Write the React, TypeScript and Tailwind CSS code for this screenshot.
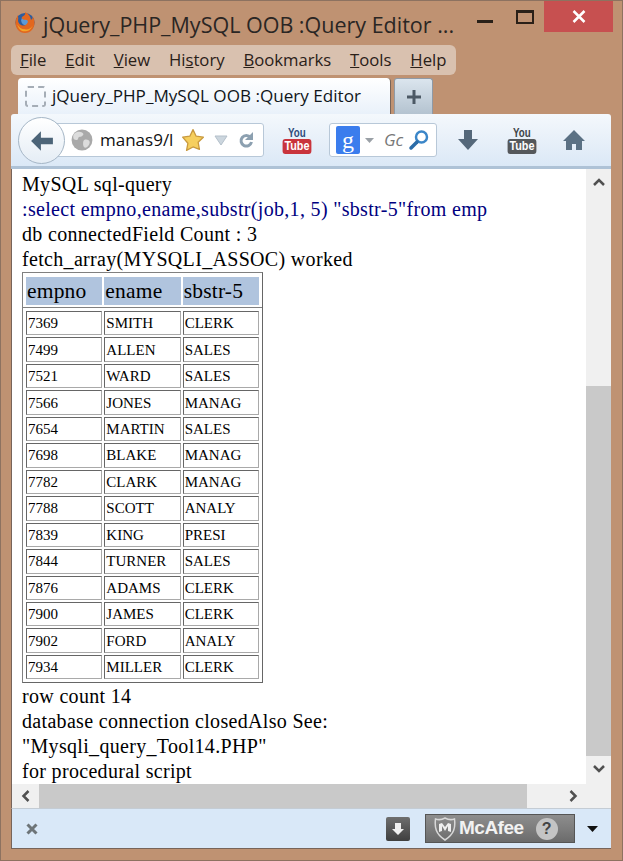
const rows = [
  ['7369', 'SMITH', 'CLERK'],
  ['7499', 'ALLEN', 'SALES'],
  ['7521', 'WARD', 'SALES'],
  ['7566', 'JONES', 'MANAG'],
  ['7654', 'MARTIN', 'SALES'],
  ['7698', 'BLAKE', 'MANAG'],
  ['7782', 'CLARK', 'MANAG'],
  ['7788', 'SCOTT', 'ANALY'],
  ['7839', 'KING', 'PRESI'],
  ['7844', 'TURNER', 'SALES'],
  ['7876', 'ADAMS', 'CLERK'],
  ['7900', 'JAMES', 'CLERK'],
  ['7902', 'FORD', 'ANALY'],
  ['7934', 'MILLER', 'CLERK'],
]

const menus = [
  ['F', 'ile', ''],
  ['E', 'dit', ''],
  ['V', 'iew', ''],
  ['Hi', 's', 'tory'],
  ['B', 'ookmarks', ''],
  ['T', 'ools', ''],
  ['H', 'elp', ''],
]

function FirefoxLogo() {
  return (
    <svg width="22" height="23" viewBox="0 0 22 24">
      <circle cx="11" cy="12" r="10" fill="#2d5c9e" />
      <circle cx="12" cy="10" r="5" fill="#5d9ad6" />
      <path d="M3 4c0 3-2 5-2 8 0 6 4 11 10 11s10-5 10-11c0-2-1-5-2-6 0 2-1 3-2 3 0-3-2-6-6-8 1 3-1 4-3 5-1 1 0 3 2 3s4 0 4 2-3 5-6 4c-3-1-5-4-4-7 0-2-1-3-1-4z" fill="#e2671f" />
      <path d="M3 14c1 5 5 8 9 7 3 0 6-3 7-6-2 3-5 5-8 4-4 0-6-2-8-5z" fill="#f4a62a" />
    </svg>
  )
}

function Globe() {
  return (
    <svg className="shrink-0" width="22" height="22" viewBox="0 0 20 20">
      <circle cx="10" cy="10" r="9.500" fill="#a9a9a9" />
      <path d="M5 3c3-1 5 0 6 1s-1 3-3 3-1 3-3 3-3-1-3-3 1-3 3-4zM12 10c2-1 5 0 5 2s-2 5-4 5-2-3-2-4 0-2 1-3z" fill="#dcdcdc" />
    </svg>
  )
}

function Star() {
  return (
    <svg width="24" height="24" viewBox="0 0 22 22">
      <path d="M11 1.500l2.900 6 6.600.9-4.800 4.600 1.200 6.500L11 17.400l-5.900 3.100 1.200-6.500L1.500 8.400l6.600-.9z" fill="#f6cf5e" stroke="#c99a3f" strokeWidth="1.200" strokeLinejoin="round" />
    </svg>
  )
}

function ReloadIcon() {
  return (
    <svg width="16" height="18" viewBox="0 0 16 18" fill="none">
      <path d="M12.500 6.500A5.300 5.300 0 1 0 13.500 11" stroke="#8ca0b0" strokeWidth="3" />
      <path d="M15 1v8H7z" fill="#8ca0b0" />
    </svg>
  )
}

function YouTubeBadge({ blurred }: { blurred?: boolean }) {
  return (
    <div className={`flex flex-col items-center font-['Liberation_Sans',sans-serif] font-bold leading-none ${blurred ? 'text-[#2f4d7c]' : 'text-[#3f4549]'}`}>
      <span className="h-[12px] scale-x-75 text-[13px]">You</span>
      <span className={`mt-[1px] h-[15px] scale-x-90 rounded-[3px] px-[2px] text-[12px] leading-[15px] text-white ${blurred ? 'bg-[#c9343c]' : 'bg-[#55585b]'}`}>Tube</span>
    </div>
  )
}

function McAfeeShield() {
  return (
    <svg className="shrink-0" width="22" height="24" viewBox="0 0 22 24" fill="none">
      <path d="M1.500 2c3 1 6 1 9.500-1 3.500 2 6.500 2 9.500 1 1 8 0 15-9.500 21C1.500 17 .5 10 1.500 2z" stroke="#d8d8d8" strokeWidth="1.500" />
      <path d="M5 7v8l3-1V9l3 5 3-5v5l3 1V7l-3-1-3 4-3-4z" fill="#efefef" />
    </svg>
  )
}

function Chevron({ dir }: { dir: 'up' | 'down' | 'left' | 'right' }) {
  const d = {
    up: 'M2 9l5-5 5 5',
    down: 'M2 4l5 5 5-5',
    left: 'M9.500 2L4.500 7l5 5',
    right: 'M4.500 2l5 5-5 5',
  }[dir]
  return (
    <svg width="14" height="14" viewBox="0 0 14 14" fill="none">
      <path d={d} stroke="#505050" strokeWidth="2.500" />
    </svg>
  )
}

export default function App() {
  return (
    <div className="h-[861px] w-[623px] overflow-hidden border border-[#8d7260] bg-[#bf9272] font-['Open_Sans',sans-serif] text-[#1b1410]">
      {/* title bar */}
      <div className="flex h-[44px] items-start pl-[13px] pr-[9px]">
        <div className="mt-[10px]">
          <FirefoxLogo />
        </div>
        <span className="ml-[7px] mt-[8px] whitespace-nowrap text-[21.500px] leading-[32px] text-[#2a2624]">jQuery_PHP_MySQL OOB :Query Editor ...</span>
        <div className="ml-auto flex items-start">
          <div className="mr-[23px] mt-[19px] h-[3px] w-[16px] bg-[#2a2018]" />
          <div className="mr-[10px] mt-[9px] h-[14px] w-[18px] border-2 border-t-[3px] border-[#2a2018]" />
          <div className="flex h-[31px] w-[69px] items-start justify-center bg-[#c75050]">
            <svg className="mt-[9px]" width="14" height="13" viewBox="0 0 14 13">
              <path d="M1.500 1l11 11M12.500 1l-11 11" stroke="#fff" strokeWidth="2.500" />
            </svg>
          </div>
        </div>
      </div>

      {/* menu bar */}
      <div className="ml-[10px] flex h-[30px] w-[445px] items-center gap-[18.800px] rounded-[6px] bg-[#d9c1af] pl-[9px] text-[16.700px] text-[#2a2018]">
        {menus.map(([a, b, c], i) => (
          <span key={a + i} className="whitespace-nowrap">
            {i === 3 ? (
              <>
                {a}
                <span className="underline">{b}</span>
                {c}
              </>
            ) : (
              <>
                <span className="underline">{a}</span>
                {b}
              </>
            )}
          </span>
        ))}
      </div>

      {/* tab strip */}
      <div className="ml-[17px] mt-[3px] flex h-[36px] items-start">
        <div className="flex h-[36px] w-[373px] shrink-0 items-center rounded-t-[4px] border-r border-[#77645a] bg-gradient-to-b from-[#ffffff] to-[#e9f1fa] pl-[7px]">
          <div className="h-[21px] w-[21px] shrink-0 rounded-[3px] border-2 border-dashed border-[#a5adb6]" />
          <span className="ml-[6px] whitespace-nowrap text-[17.100px] text-[#10151a]">jQuery_PHP_MySQL OOB :Query Editor</span>
        </div>
        <div className="ml-[3px] flex h-[36px] w-[39px] shrink-0 items-center justify-center rounded-t-[3px] border border-b-0 border-[#8f9aa6] bg-gradient-to-b from-[#dbe5ee] to-[#b4c3d0]">
          <svg width="14" height="14" viewBox="0 0 14 14">
            <path d="M7 0v14M0 7h14" stroke="#4c5965" strokeWidth="3" />
          </svg>
        </div>
      </div>

      {/* toolbar */}
      <div className="relative ml-[10px] flex h-[55px] w-[600px] items-center rounded-t-[3px] border-b-[3px] border-[#aec2d6] bg-gradient-to-b from-[#f4f8fc] to-[#dbe8f6]">
        <div className="absolute left-[7px] top-[3px] z-10 flex h-[47px] w-[47px] items-center justify-center rounded-full border border-[#a5b6c6] bg-gradient-to-b from-[#ffffff] to-[#e5edf5]">
          <svg width="24" height="22" viewBox="0 0 22 20">
            <path d="M10 1l-9 9 9 9v-6h11V7H10z" fill="#4c6478" />
          </svg>
        </div>
        <div className="ml-[30px] flex h-[34px] w-[223px] shrink-0 items-center rounded-[3px] border border-[#b8c8d8] bg-white pl-[29px]">
          <Globe />
          <span className="ml-[7px] w-[71px] shrink-0 whitespace-nowrap text-[17px] leading-[24px] text-[#101010]">manas9/l</span>
          <div className="ml-[10px]">
            <Star />
          </div>
          <svg className="ml-[9px]" width="14" height="11" viewBox="0 0 14 11">
            <path d="M1 1h12l-6 9z" fill="#ccd6de" stroke="#b4c0ca" />
          </svg>
          <div className="ml-[10px]">
            <ReloadIcon />
          </div>
        </div>
        <div className="ml-[20px] w-[26px] shrink-0">
          <YouTubeBadge blurred />
        </div>
        <div className="ml-[19px] flex h-[34px] w-[108px] shrink-0 items-center rounded-[3px] border border-[#b8c8d8] bg-white pl-[6px]">
          <div className="flex h-[28px] w-[24px] shrink-0 items-center justify-center rounded-[2px] bg-[#3b7ded] font-['Liberation_Serif',serif] text-[24px] leading-[22px] text-white">g</div>
          <svg className="ml-[5px]" width="9" height="5" viewBox="0 0 9 5">
            <path d="M0 0h9L4.500 5z" fill="#9aa0a6" />
          </svg>
          <span className="ml-[10px] w-[19px] shrink-0 whitespace-nowrap text-[17px] leading-[24px] italic text-[#777]">Gc</span>
          <svg className="ml-[5px]" width="22" height="22" viewBox="0 0 22 22" fill="none">
            <circle cx="13.500" cy="8" r="5.500" stroke="#3b86c8" strokeWidth="2.500" />
            <path d="M9 13l-6 6" stroke="#2b6ca8" strokeWidth="3.500" strokeLinecap="round" />
          </svg>
        </div>
        <svg className="ml-[20px] shrink-0" width="22" height="22" viewBox="0 0 22 22">
          <path d="M7 1h8v9h6L11 21 1 10h6z" fill="#55687a" />
        </svg>
        <div className="ml-[30px] w-[26px] shrink-0">
          <YouTubeBadge />
        </div>
        <svg className="ml-[27px] shrink-0" width="24" height="22" viewBox="0 0 24 22">
          <path d="M12 1L1 12h3v9h6v-6h4v6h6v-9h3z" fill="#5b7184" />
        </svg>
      </div>

      {/* page */}
      <div className="ml-[10px] flex h-[639px] w-[600px] border-l border-[#77645a] bg-white">
        <div className="flex w-[574px] flex-col">
          <div className="h-[615px] pl-[10px] pt-[3px] font-['Liberation_Serif',serif] text-[20px] leading-[25px] tracking-[0.32px] text-black">
            <div>MySQL sql-query</div>
            <div className="text-[#000080]">:select empno,ename,substr(job,1, 5) "sbstr-5"from emp</div>
            <div>db connectedField Count : 3</div>
            <div>fetch_array(MYSQLI_ASSOC) worked</div>
            <div className="w-[241px] border border-[#808080] border-r-[#666] border-b-[#666]">
              <div className="grid grid-cols-3 gap-x-[2px] px-[3px] pt-[4px] text-[21.500px] leading-[28px] tracking-[0.2px]">
                <div className="h-[28px] bg-[#b0c4de] pl-[1px]">empno</div>
                <div className="h-[28px] bg-[#b0c4de] pl-[1px]">ename</div>
                <div className="h-[28px] bg-[#b0c4de] pl-[1px]">sbstr-5</div>
              </div>
              <div className="mt-[2px] border-t border-[#808080]" />
              <div className="grid auto-rows-[24.460px] grid-cols-3 gap-x-[2px] gap-y-[2px] px-[3px] pb-[3px] pt-[3px] text-[15px] leading-[20px] tracking-normal">
                {rows.map((row) =>
                  row.map((cell) => (
                    <div key={row[0] + cell} className="flex items-center border border-[#a9a9a9] border-t-[#666] border-l-[#666] pl-[1px]">
                      {cell}
                    </div>
                  ))
                )}
              </div>
            </div>
            <div className="mt-[1px]">row count 14</div>
            <div>database connection closedAlso See:</div>
            <div>"Mysqli_query_Tool14.PHP"</div>
            <div>for procedural script</div>
          </div>
          {/* horizontal scrollbar */}
          <div className="flex h-[24px] items-center bg-[#f0f0f0]">
            <div className="flex w-[27px] justify-center">
              <Chevron dir="left" />
            </div>
            <div className="h-full w-[488px] bg-[#c9c9c9]" />
            <div className="ml-auto flex w-[26px] justify-center bg-[#f0f0f0]">
              <Chevron dir="right" />
            </div>
          </div>
        </div>
        {/* vertical scrollbar */}
        <div className="flex h-[639px] w-[25px] flex-col bg-[#f0f0f0]">
          <div className="flex h-[28px] items-center justify-center">
            <Chevron dir="up" />
          </div>
          <div className="mt-[189px] h-[370px] bg-[#c9c9c9]" />
          <div className="flex h-[26px] items-center justify-center">
            <Chevron dir="down" />
          </div>
        </div>
      </div>

      {/* status bar */}
      <div className="ml-[10px] flex h-[41px] w-[600px] items-center border-t border-l border-[#c4ccd4] border-l-[#77645a] border-b border-b-[#77645a] bg-[#d9e8f8] pl-[14px]">
        <svg className="shrink-0" width="12" height="12" viewBox="0 0 12 12">
          <path d="M1.500 1.500l9 9M10.500 1.500l-9 9" stroke="#6d7478" strokeWidth="3" />
        </svg>
        <div className="ml-[348px] flex h-[24px] w-[24px] shrink-0 items-center justify-center rounded-[2px] bg-gradient-to-b from-[#6f6f6f] to-[#3f3f3f]">
          <svg width="14" height="14" viewBox="0 0 14 14">
            <path d="M4 1h6v6h3l-6 6-6-6h3z" fill="#efefef" />
          </svg>
        </div>
        <div className="ml-[15px] flex h-[29px] w-[150px] shrink-0 items-center border border-[#555] bg-gradient-to-b from-[#8d8d8d] via-[#7d7d7d] to-[#6b6b6b] pl-[8px]">
          <McAfeeShield />
          <span className="ml-[3px] font-['Liberation_Sans',sans-serif] text-[19px] font-bold tracking-[-0.5px] text-[#f2f2f2]">McAfee</span>
          <span className="ml-[12px] flex h-[22px] w-[22px] items-center justify-center rounded-full bg-[#c4c4c4] font-['Liberation_Sans',sans-serif] text-[16px] font-bold text-[#444]">?</span>
        </div>
        <svg className="ml-[12px] shrink-0" width="11" height="6" viewBox="0 0 11 6">
          <path d="M0 0h11L5.500 6z" fill="#111" />
        </svg>
      </div>
    </div>
  )
}
